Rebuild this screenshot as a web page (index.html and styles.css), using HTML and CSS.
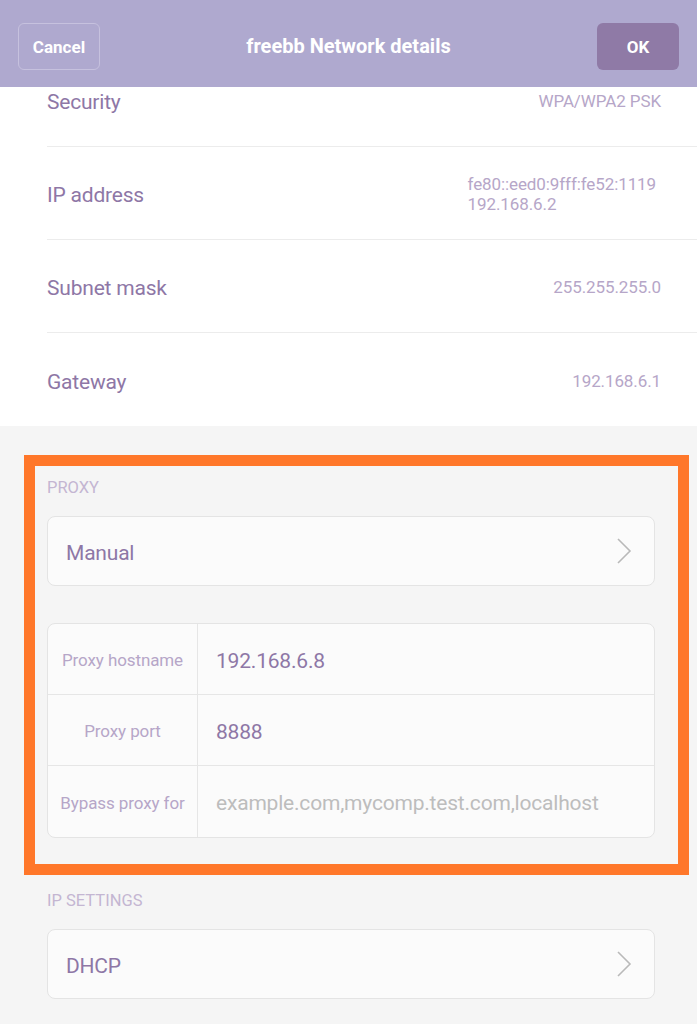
FILE: index.html
```html
<!DOCTYPE html>
<html lang="en">
<head>
    <meta charset="UTF-8">
    <title>freebb Network details</title>
    <link rel="stylesheet" href="styles.css">
</head>
<body>
    <div class="topbar">
        <button class="btn btn-cancel">Cancel</button>
        <div class="title">freebb Network details</div>
        <button class="btn btn-ok">OK</button>
    </div>
    <div class="details-wrap">
        <div class="details">
            <div class="row first">
                <span class="label">Security</span>
                <span class="value">WPA/WPA2 PSK</span>
            </div>
            <div class="row">
                <span class="label">IP address</span>
                <span class="value multi">fe80::eed0:9fff:fe52:1119<br>192.168.6.2</span>
            </div>
            <div class="row">
                <span class="label">Subnet mask</span>
                <span class="value">255.255.255.0</span>
            </div>
            <div class="row last">
                <span class="label">Gateway</span>
                <span class="value">192.168.6.1</span>
            </div>
        </div>
    </div>
    <div class="settings">
        <div class="section-label">PROXY</div>
        <div class="card select">
            <span class="select-text">Manual</span>
            <svg class="chevron" width="16" height="26" viewBox="0 0 16 26"><polyline points="2,1 14,13 2,25" fill="none" stroke="#b9b9b9" stroke-width="1.6"/></svg>
        </div>
        <div class="card fields">
            <div class="field-label">Proxy hostname</div>
            <div class="field-value">192.168.6.8</div>
            <div class="field-label">Proxy port</div>
            <div class="field-value">8888</div>
            <div class="field-label">Bypass proxy for</div>
            <div class="field-value placeholder">example.com,mycomp.test.com,localhost</div>
        </div>
        <div class="section-label ip">IP SETTINGS</div>
        <div class="card select">
            <span class="select-text">DHCP</span>
            <svg class="chevron" width="16" height="26" viewBox="0 0 16 26"><polyline points="2,1 14,13 2,25" fill="none" stroke="#b9b9b9" stroke-width="1.6"/></svg>
        </div>
        <div class="highlight"></div>
    </div>
</body>
</html>
```

FILE: styles.css
```css
body {
    margin: 0;
    font-family: Roboto, "Liberation Sans", sans-serif;
    background: #f5f5f5;
}
.topbar {
    height: 87px;
    background: #afa9cf;
    display: flex;
    align-items: flex-start;
    justify-content: space-between;
    padding: 23px 18px 0;
    box-sizing: border-box;
}
.title {
    color: #fff;
    font-weight: bold;
    font-size: 20px;
    line-height: 47px;
}
.btn {
    width: 82px;
    height: 47px;
    border-radius: 6px;
    font-family: Roboto, "Liberation Sans", sans-serif;
    font-size: 17px;
    font-weight: bold;
    color: #fff;
}
.btn-cancel {
    background: transparent;
    border: 1px solid #c6c1de;
}
.btn-ok {
    background: #8f7aa6;
    border: none;
}
.details-wrap {
    overflow: hidden;
    background: #fff;
}
.row {
    height: 93px;
    margin-left: 47px;
    padding-right: 36px;
    display: flex;
    align-items: center;
    justify-content: space-between;
    border-bottom: 1px solid #ececec;
    box-sizing: border-box;
}
.row.first {
    margin-top: -33px;
}
.row.last {
    border-bottom: none;
}
.label {
    font-size: 21px;
    letter-spacing: -0.2px;
    color: #8e77a6;
    padding-top: 4px;
}
.value {
    font-size: 17px;
    letter-spacing: -0.1px;
    color: #b6a6c8;
    padding-top: 2px;
}
.value.multi {
    line-height: 20px;
    margin-right: 5px;
}
.settings {
    position: relative;
    padding: 52px 42px 26px 47px;
}
.section-label {
    font-size: 16.5px;
    line-height: 20px;
    color: #c4b6d2;
    margin-bottom: 18px;
    padding-top: 1px;
    margin-top: -1px;
}
.section-label.ip {
    margin-top: 52px;
}
.card {
    background: #fbfbfb;
    border: 1px solid #e4e4e4;
    border-radius: 8px;
    box-sizing: border-box;
}
.select {
    height: 70px;
    display: flex;
    align-items: center;
    justify-content: space-between;
    padding: 0 22px 0 18px;
    font-size: 21px;
    letter-spacing: -0.2px;
    color: #8e77a6;
}
.select-text {
    padding-top: 4px;
}
.fields {
    margin-top: 37px;
    display: grid;
    grid-template-columns: 150px 1fr;
    grid-auto-rows: 71px;
}
.field-label {
    display: flex;
    align-items: center;
    justify-content: center;
    font-size: 17px;
    letter-spacing: -0.1px;
    color: #b6a6c8;
    border-right: 1px solid #e6e6e6;
    border-bottom: 1px solid #e6e6e6;
    padding-top: 2px;
}
.field-value {
    display: flex;
    align-items: center;
    padding-left: 18px;
    padding-top: 3px;
    font-size: 21px;
    letter-spacing: -0.2px;
    color: #8e77a6;
    border-bottom: 1px solid #e6e6e6;
}
.field-label:nth-last-child(2),
.field-value:last-child {
    border-bottom: none;
}
.placeholder {
    color: #bdbdbd;
}
.highlight {
    position: absolute;
    top: 29px;
    left: 24px;
    width: 665px;
    height: 420px;
    border: 11px solid #ff772a;
    box-sizing: border-box;
    pointer-events: none;
}
```
